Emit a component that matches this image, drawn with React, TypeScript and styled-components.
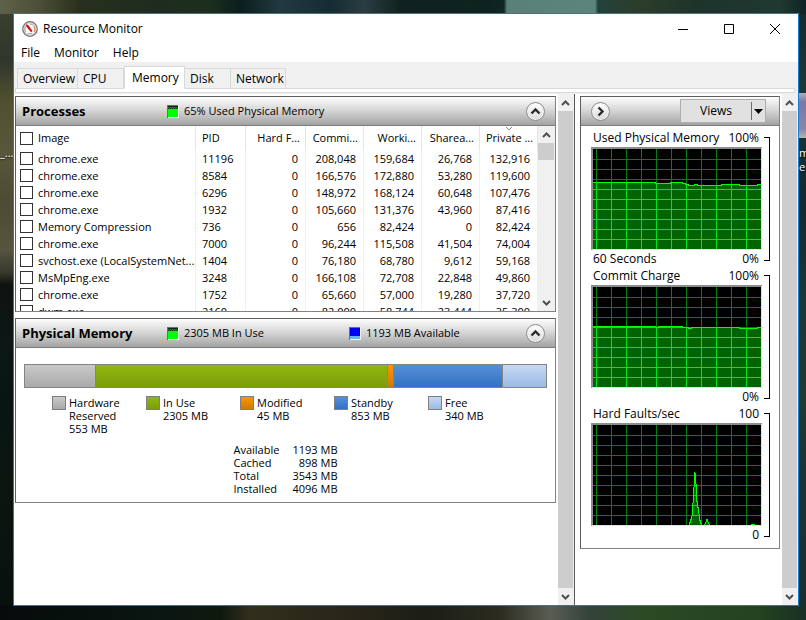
import React from "react";
import styled, { createGlobalStyle } from "styled-components";

const UI_FONT = '"Open Sans", "Noto Sans", sans-serif';

const GlobalStyle = createGlobalStyle`
  *, *::before, *::after { box-sizing: border-box; }
  body {
    margin: 0;
    font-family: ${UI_FONT};
    font-size: 12px;
    color: #000;
  }
  button { font-family: inherit; color: inherit; padding: 0; }
`;

const Desktop = styled.div`
  position: relative;
  display: flex;
  min-height: 100vh;
  padding: 13px 7px 14px 13px;
  overflow: hidden;
  background:
    linear-gradient(90deg, transparent 504px, #588077 507px, #5b857c 595px, transparent 598px) 0 0 / 100% 14px no-repeat,
    linear-gradient(90deg, #5f6249 0, #4c4e35 40px, #28301c 80px, #1e2c20 160px, #1c2f1d 210px, #0b1e1d 240px, #203a40 280px, #152c32 330px, #2b3d43 365px, #10211f 400px, #0e231f 490px, #23413c 600px, #2c3d2a 640px, #1d332b 700px, #1f3a30 780px, #102326 100%) 0 0 / 100% 14px no-repeat,
    linear-gradient(90deg, #060c0b 0, #0a1411 150px, #10180f 220px, #322e1c 250px, #2b2719 330px, #1c1e17 430px, #2c2c1f 500px, #5a5d54 550px, #33423a 590px, #2c4a24 640px, #24421f 760px, #183025 100%) 0 100% / 100% 15px no-repeat,
    linear-gradient(180deg, #3a4333 0, #2f362c 60px, #504f2f 100px, #59573b 150px, #4d4b33 200px, #56543f 250px, #39382c 272px, #0d1311 285px, #0e1716 340px, #081514 400px, #0d1510 480px, #07100e 100%) 0 0 / 14px 100% no-repeat,
    linear-gradient(180deg, #17282a 0, #1c3835 90px, #12292f 200px, #1b3736 300px, #22392f 400px, #1a3234 480px, #1a2f2c 100%);
`;

const DesktopLabel = styled.span<{ $side: "left" | "right"; $top: number }>`
  position: absolute;
  top: ${(p) => p.$top}px;
  ${(p) => (p.$side === "left" ? "left: 0;" : "left: calc(100% - 7px);")}
  color: #fff;
  font-size: 11px;
  line-height: 14px;
  white-space: nowrap;
  text-shadow: 0 1px 2px #000;
`;

const DesktopTile = styled.span`
  position: absolute;
  top: 93px;
  right: 0;
  width: 7px;
  height: 45px;
  background: linear-gradient(#b0aebb, #7b76a4 20%, #8a86a5 80%, #b5b5b0);
`;

const Window = styled.main`
  position: relative;
  flex: 1;
  min-width: 0;
  display: flex;
  flex-direction: column;
  border: 1px solid #1a7cce;
  background: #fff;
`;

const TitleBar = styled.header`
  display: flex;
  align-items: center;
  height: 30px;
  padding-left: 8px;
  gap: 5px;
`;

const Title = styled.h1`
  flex: 1;
  margin: 0;
  font-size: 12px;
  font-weight: 400;
  line-height: 16px;
`;

const CaptionButton = styled.button`
  display: grid;
  place-items: center;
  width: 46px;
  height: 29px;
  border: 0;
  background: none;
`;

const CaptionButtons = styled.div`
  display: flex;
`;

const MenuBar = styled.nav`
  display: flex;
  height: 18px;
  padding-left: 7px;
  gap: 14px;
`;

const MenuItem = styled.button`
  border: 0;
  background: none;
  font-size: 12px;
  line-height: 18px;
  height: 18px;
`;

const TabArea = styled.div`
  height: 32px;
  padding: 4px 3px 1px 1px;
  background: #f0f0f0;
  display: flex;
  flex-direction: column;
`;

const TabList = styled.div`
  display: flex;
  align-items: flex-end;
  height: 23px;
  padding-left: 2px;
  margin-bottom: -1px;
  z-index: 1;
`;

const Tab = styled.button<{ $width: number; $active?: boolean }>`
  width: ${(p) => p.$width}px;
  height: ${(p) => (p.$active ? 23 : 21)}px;
  padding: 0 0 0 ${(p) => (p.$active ? 7 : 5)}px;
  border: 1px solid #d9d9d9;
  border-left-width: ${(p) => (p.$active ? 1 : 0)}px;
  border-bottom-color: ${(p) => (p.$active ? "#fff" : "#d9d9d9")};
  background: ${(p) => (p.$active ? "#fff" : "#f0f0f0")};
  font-size: 12px;
  line-height: 18px;
  text-align: left;
  &:first-child { border-left-width: 1px; }
`;

const TabStrip = styled.div`
  height: 5px;
  border: 1px solid #d9d9d9;
  background: #fff;
`;

const Body = styled.div`
  flex: 1;
  display: flex;
`;

const MainPane = styled.section`
  flex: 1;
  min-width: 0;
  display: flex;
  flex-direction: column;
  gap: 6px;
  padding: 2px 2px 0 1px;
`;

const SidePane = styled.aside`
  width: 208px;
  padding: 2px 2px 0 5px;
  border-left: 1px solid #5a5a5a;
`;

const Panel = styled.section`
  border: 1px solid #828282;
  border-left-color: #5f5f5f;
  border-top-color: #5f5f5f;
  background: #fff;
`;

const PanelHeader = styled.header`
  display: flex;
  align-items: center;
  height: 29px;
  padding: 0 10px 0 6px;
  border-bottom: 1px solid #7d7d7d;
  background: linear-gradient(#fdfdfd, #d8d8d8 45%, #a3a3a3);
`;

const PanelTitle = styled.h2`
  flex: none;
  width: 145px;
  margin: 0;
  font-size: 13px;
  font-weight: 700;
  line-height: 18px;
`;

const Stat = styled.div`
  flex: none;
  display: flex;
  align-items: center;
  gap: 5px;
  width: 182px;
  font-size: 11px;
  line-height: 14px;
  white-space: nowrap;
  &:last-of-type { width: auto; }
`;

const Spacer = styled.span`
  flex: 1;
`;

const RoundButton = styled.button`
  flex: none;
  display: grid;
  place-items: center;
  width: 19px;
  height: 19px;
  border: 1px solid #8e8e8e;
  border-radius: 50%;
  background: linear-gradient(#fff, #d9d9d9);
  box-shadow: inset 0 0 0 1px #f4f4f4;
`;

const ScrollTrack = styled.div<{ $width: number }>`
  flex: none;
  display: flex;
  flex-direction: column;
  width: ${(p) => p.$width}px;
  padding-right: 1px;
  background: #f0f0f0;
`;

const ScrollButton = styled.button`
  display: grid;
  place-items: center;
  height: 17px;
  border: 0;
  background: #f0f0f0;
`;

const ScrollThumb = styled.div<{ $full?: boolean }>`
  ${(p) => (p.$full ? "flex: 1;" : "height: 17px; margin-bottom: auto;")}
  background: #cdcdcd;
`;

const TableArea = styled.div`
  display: flex;
  height: 185px;
`;

const TableClip = styled.div`
  flex: 1;
  min-width: 0;
  overflow: hidden;
`;

const ProcessTable = styled.table`
  width: 100%;
  table-layout: fixed;
  border-collapse: separate;
  border-spacing: 0;
  font-size: 11px;
`;

const Col = styled.col<{ $width?: number }>`
  width: ${(p) => (p.$width ? `${p.$width}px` : "auto")};
`;

const HeadCell = styled.th<{ $right?: boolean }>`
  position: relative;
  height: 24px;
  padding: 0 5px 0 6px;
  border-right: 1px solid #e5e5e5;
  font-weight: 400;
  text-align: ${(p) => (p.$right ? "right" : "left")};
  line-height: 14px;
  white-space: nowrap;
`;

const SortMark = styled.svg`
  position: absolute;
  top: 0;
  left: calc(50% - 4px);
`;

const Cell = styled.td<{ $right?: boolean }>`
  height: 17px;
  padding: 0 7px 0 6px;
  border-right: 1px solid #e9f1fa;
  text-align: ${(p) => (p.$right ? "right" : "left")};
  line-height: 15px;
  white-space: nowrap;
`;

const CheckLabel = styled.label`
  display: flex;
  align-items: center;
  gap: 5px;
  margin-left: -2px;
`;

const CheckBox = styled.input`
  appearance: none;
  flex: none;
  width: 13px;
  height: 13px;
  margin: 0;
  border: 1px solid #333;
  background: #fff;
`;

const MemoryBody = styled.div`
  padding: 16px 8px 7px;
  font-size: 11px;
  line-height: 13px;
`;

const MemoryBar = styled.div`
  display: flex;
  height: 24px;
  border: 1px solid #848484;
`;

const paints: Record<string, string> = {
  hardware: "linear-gradient(#c9c9c9, #a9a9a9)",
  used: "linear-gradient(#90b80e, #7b9d0c)",
  modified: "linear-gradient(#fb9608, #cf7a05)",
  standby: "linear-gradient(#5590d8, #3172c5)",
  free: "linear-gradient(#c6d8f2, #9bbae6)",
};

const Segment = styled.div<{ $kind: string; $mb: number }>`
  flex: ${(p) => p.$mb} 1 0;
  background: ${(p) => paints[p.$kind]};
  & + & { border-left: 1px solid #848484; }
`;

const Legend = styled.ul`
  display: grid;
  grid-template-columns: repeat(5, 94px);
  justify-content: center;
  margin: 8px 0;
  padding: 0 0 0 3px;
  list-style: none;
`;

const LegendItem = styled.li`
  display: flex;
  gap: 3px;
`;

const Swatch = styled.span<{ $kind: string }>`
  flex: none;
  width: 14px;
  height: 14px;
  border: 1px solid #7f7f7f;
  background: ${(p) => paints[p.$kind]};
`;

const LegendText = styled.span`
  white-space: pre-line;
`;

const Totals = styled.table`
  width: 104px;
  margin: 0 auto;
  border-spacing: 0;
  td { padding: 0; text-align: right; white-space: nowrap; }
  th { padding: 0; font-weight: 400; text-align: left; white-space: nowrap; }
`;

const SideHeader = styled(PanelHeader)`
  justify-content: space-between;
  padding: 0 13px 0 10px;
`;

const SplitButton = styled.div`
  display: flex;
  align-items: center;
  width: 86px;
  height: 24px;
  border: 1px solid #adadad;
  background: #e1e1e1;
`;

const ViewsButton = styled.button`
  flex: 1;
  height: 18px;
  border: 0;
  border-right: 1px solid #6e6e6e;
  background: none;
  font-size: 12px;
  line-height: 18px;
`;

const DropButton = styled.button`
  display: grid;
  place-items: center;
  width: 13px;
  height: 18px;
  border: 0;
  background: none;
`;

const Charts = styled.div`
  padding: 3px 9px 5px 10px;
`;

const ChartBlock = styled.figure`
  display: flex;
  gap: 2px;
  margin: 0;
`;

const ChartColumn = styled.div`
  flex: 1;
  min-width: 0;
`;

const ChartLabels = styled.div<{ $height: number }>`
  display: flex;
  justify-content: space-between;
  height: ${(p) => p.$height}px;
  padding: 0 3px 0 2px;
  font-size: 12px;
  line-height: 17px;
  white-space: nowrap;
`;

const ChartFrame = styled.div`
  height: 103px;
  border: solid;
  border-width: 2px 1px 1px 2px;
  border-color: #8c8c8c #e3e3e3 #e3e3e3 #8c8c8c;
  background: #000;
`;

const Bracket = styled.span`
  width: 6px;
  margin: 8px 0 6px;
  border: 1px solid #000;
  border-left: 0;
`;

const Plot = styled.svg`
  display: block;
  width: 100%;
  height: 100px;
`;

type Point = [number, number];

const step = (runs: [number, number][]): Point[] => {
  const pts: Point[] = [];
  runs.forEach(([x, y], i) => {
    const end = i + 1 < runs.length ? runs[i + 1][0] : 168;
    pts.push([x, y], [end, y]);
  });
  return pts;
};

const charts: { title: string; max: string; min: string; caption: string; points: Point[] }[] = [
  {
    title: "Used Physical Memory",
    max: "100%",
    min: "0%",
    caption: "60 Seconds",
    points: step([[0, 33], [62, 34], [77, 33], [89, 34], [92, 35], [95, 36], [101, 35], [104, 36], [128, 35], [146, 36], [164, 35]]),
  },
  {
    title: "Commit Charge",
    max: "100%",
    min: "0%",
    caption: "",
    points: step([[0, 39], [62, 40], [65, 39], [89, 40], [95, 41], [98, 40], [146, 41], [164, 40]]),
  },
  {
    title: "Hard Faults/sec",
    max: "100",
    min: "0",
    caption: "",
    points: [[0, 101], [96, 101], [97, 97], [99, 91], [100, 78], [101, 62], [102, 47], [103, 58], [104, 76], [106, 88], [107, 95], [109, 101], [111, 101], [114, 94], [117, 101], [158, 101], [158, 99], [161, 99], [161, 101], [168, 101]],
  },
];

const columns = [3, 18, 33, 48, 63, 78, 93, 108, 123, 138, 153];
const rows = [10, 20, 30, 40, 50, 60, 70, 80, 90];

const Grid = ({ color }: { color: string }) => (
  <g fill={color}>
    {columns.map((x) => <rect key={`x${x}`} x={x} y={0} width={1} height={100} />)}
    {rows.map((y) => <rect key={`y${y}`} x={0} y={y} width={168} height={1} />)}
  </g>
);

const Chart = ({ id, points }: { id: string; points: Point[] }) => {
  const line = points.map(([x, y]) => `${x},${y + 0.5}`).join(" ");
  const area = `0,102 ${line} 168,102`;
  return (
    <Plot viewBox="0 0 168 100" preserveAspectRatio="none" shapeRendering="crispEdges" aria-hidden="true">
      <Grid color="#008010" />
      <clipPath id={id}>
        <polygon points={area} />
      </clipPath>
      <polygon points={area} fill="#006400" />
      <g clipPath={`url(#${id})`}>
        <Grid color="#00e61e" />
      </g>
      <polyline points={line} fill="none" stroke="#00ff00" strokeWidth={1} />
    </Plot>
  );
};

const Chevron = ({ down }: { down?: boolean }) => (
  <svg width="9" height="8" viewBox="0 0 9 8" aria-hidden="true">
    <path d={down ? "M1 2l3.5 3.5L8 2" : "M1 6l3.5-3.5L8 6"} fill="none" stroke="#505050" strokeWidth="2" />
  </svg>
);

const Scrollbar = ({ width, full }: { width: number; full?: boolean }) => (
  <ScrollTrack $width={width}>
    <ScrollButton aria-label="Scroll up"><Chevron /></ScrollButton>
    <ScrollThumb $full={full} />
    <ScrollButton aria-label="Scroll down"><Chevron down /></ScrollButton>
  </ScrollTrack>
);

const Meter = ({ blue }: { blue?: boolean }) => {
  const split = blue ? 8 : 3;
  const dots: Point[] = [];
  for (let y = 2; y < split; y += 2) for (let x = 2; x < 11; x += 2) dots.push([x, y]);
  return (
    <svg width="12" height="13" viewBox="0 0 12 13" shapeRendering="crispEdges" aria-hidden="true">
      <path d="M0 0h12v13H0z" fill="#f4f4f4" />
      <path d="M0 0h11v1H1v12H0z" fill="#6d6d6d" />
      <path d="M1 1h10v11H1z" fill={blue ? "#66b2ff" : "#00ff00"} />
      <path d={`M1 1h10v${split}H1z`} fill={blue ? "#0000f0" : "#00a000"} />
      {blue
        ? dots.map(([x, y]) => <rect key={`${x}-${y}`} x={x} y={y} width="1" height="1" fill="#000070" />)
        : <path d="M1 1h10v1H1zM2 2h1v1h-1zM4 2h1v1h-1zM6 2h1v1h-1zM8 2h1v1h-1zM10 2h1v1h-1zM1 3h1v1h-1zM3 3h1v1h-1zM5 3h1v1h-1zM7 3h1v1h-1zM9 3h1v1h-1z" fill="#003000" />}
    </svg>
  );
};

const AppIcon = () => (
  <svg width="16" height="16" viewBox="0 0 16 16" aria-hidden="true">
    <circle cx="8" cy="8" r="7.2" fill="#fafafa" stroke="#7b7b78" strokeWidth="1.5" />
    <circle cx="8" cy="8" r="5.9" fill="none" stroke="#d8d8d5" strokeWidth="1" />
    <path d="M3.6 10.8A5 5 0 0 1 5 4M8 3.2a5 5 0 0 1 3 1" fill="none" stroke="#9a9a98" />
    <path d="M11.6 4.8a5 5 0 0 1 .4 6" fill="none" stroke="#e08a50" strokeWidth="1.3" />
    <path d="M4 3.2l2.2.8 4.3 6-1.5 1.2-4.5-5.4z" fill="#cc1414" />
    <path d="M5.5 12.5h5" stroke="#b0b0ae" />
  </svg>
);

const RoundChevron = ({ right }: { right?: boolean }) => (
  <svg width="11" height="11" viewBox="0 0 11 11" aria-hidden="true">
    <path d={right ? "M3.5 1.5l4 4-4 4" : "M1.5 7.5l4-4 4 4"} fill="none" stroke="#2b2b2b" strokeWidth="2.4" />
  </svg>
);

const tabs: [string, number][] = [["Overview", 61], ["CPU", 46], ["Memory", 61], ["Disk", 46], ["Network", 55]];

const headings = ["Hard F...", "Commi...", "Worki...", "Sharea...", "Private ..."];

const processes = [
  ["chrome.exe", "11196", "0", "208,048", "159,684", "26,768", "132,916"],
  ["chrome.exe", "8584", "0", "166,576", "172,880", "53,280", "119,600"],
  ["chrome.exe", "6296", "0", "148,972", "168,124", "60,648", "107,476"],
  ["chrome.exe", "1932", "0", "105,660", "131,376", "43,960", "87,416"],
  ["Memory Compression", "736", "0", "656", "82,424", "0", "82,424"],
  ["chrome.exe", "7000", "0", "96,244", "115,508", "41,504", "74,004"],
  ["svchost.exe (LocalSystemNet...", "1404", "0", "76,180", "68,780", "9,612", "59,168"],
  ["MsMpEng.exe", "3248", "0", "166,108", "72,708", "22,848", "49,860"],
  ["chrome.exe", "1752", "0", "65,660", "57,000", "19,280", "37,720"],
  ["dwm.exe", "2160", "0", "82,000", "58,744", "23,444", "35,300"],
];

const memory: { kind: string; label: string; mb: number }[] = [
  { kind: "hardware", label: "Hardware\nReserved", mb: 553 },
  { kind: "used", label: "In Use", mb: 2305 },
  { kind: "modified", label: "Modified", mb: 45 },
  { kind: "standby", label: "Standby", mb: 853 },
  { kind: "free", label: "Free", mb: 340 },
];

const totals = [["Available", "1193 MB"], ["Cached", "898 MB"], ["Total", "3543 MB"], ["Installed", "4096 MB"]];

const Processes = () => (
  <Panel>
    <PanelHeader>
      <PanelTitle>Processes</PanelTitle>
      <Stat><Meter />65% Used Physical Memory</Stat>
      <Spacer />
      <RoundButton aria-label="Collapse processes"><RoundChevron /></RoundButton>
    </PanelHeader>
    <TableArea>
      <TableClip>
        <ProcessTable>
          <colgroup>
            <Col />
            <Col $width={50} />
            <Col $width={60} />
            <Col $width={58} />
            <Col $width={58} />
            <Col $width={58} />
            <Col $width={58} />
          </colgroup>
          <thead>
            <tr>
              <HeadCell><CheckLabel><CheckBox type="checkbox" />Image</CheckLabel></HeadCell>
              <HeadCell>PID</HeadCell>
              {headings.map((h, i) => (
                <HeadCell key={h} $right>
                  {h}
                  {i === headings.length - 1 && (
                    <SortMark width="8" height="5" viewBox="0 0 8 5" aria-hidden="true">
                      <path d="M1 1l3 3 3-3" fill="none" stroke="#8a8a8a" />
                    </SortMark>
                  )}
                </HeadCell>
              ))}
            </tr>
          </thead>
          <tbody>
            {processes.map(([name, pid, ...numbers]) => (
              <tr key={pid}>
                <Cell><CheckLabel><CheckBox type="checkbox" />{name}</CheckLabel></Cell>
                <Cell>{pid}</Cell>
                {numbers.map((n, i) => <Cell key={i} $right>{n}</Cell>)}
              </tr>
            ))}
          </tbody>
        </ProcessTable>
      </TableClip>
      <Scrollbar width={17} />
    </TableArea>
  </Panel>
);

const PhysicalMemory = () => (
  <Panel>
    <PanelHeader>
      <PanelTitle>Physical Memory</PanelTitle>
      <Stat><Meter />2305 MB In Use</Stat>
      <Stat><Meter blue />1193 MB Available</Stat>
      <Spacer />
      <RoundButton aria-label="Collapse physical memory"><RoundChevron /></RoundButton>
    </PanelHeader>
    <MemoryBody>
      <MemoryBar>
        {memory.map((m) => <Segment key={m.kind} $kind={m.kind} $mb={m.mb} />)}
      </MemoryBar>
      <Legend>
        {memory.map((m) => (
          <LegendItem key={m.kind}>
            <Swatch $kind={m.kind} />
            <LegendText>{`${m.label}\n${m.mb} MB`}</LegendText>
          </LegendItem>
        ))}
      </Legend>
      <Totals>
        <tbody>
          {totals.map(([label, value]) => (
            <tr key={label}><th scope="row">{label}</th><td>{value}</td></tr>
          ))}
        </tbody>
      </Totals>
    </MemoryBody>
  </Panel>
);

export default function App() {
  return (
    <Desktop>
      <GlobalStyle />
      <DesktopLabel $side="left" $top={146}>_...</DesktopLabel>
      <DesktopTile />
      <DesktopLabel $side="right" $top={146}>m</DesktopLabel>
      <DesktopLabel $side="right" $top={160}>er</DesktopLabel>
      <Window>
        <TitleBar>
          <AppIcon />
          <Title>Resource Monitor</Title>
          <CaptionButtons>
            <CaptionButton aria-label="Minimize">
              <svg width="10" height="10" shapeRendering="crispEdges"><path d="M0 5h10v1H0z" /></svg>
            </CaptionButton>
            <CaptionButton aria-label="Maximize">
              <svg width="10" height="10"><path d="M.5.5h9v9h-9z" fill="none" stroke="#000" /></svg>
            </CaptionButton>
            <CaptionButton aria-label="Close">
              <svg width="10" height="10"><path d="M0 0l10 10M10 0L0 10" fill="none" stroke="#000" /></svg>
            </CaptionButton>
          </CaptionButtons>
        </TitleBar>
        <MenuBar>
          <MenuItem>File</MenuItem>
          <MenuItem>Monitor</MenuItem>
          <MenuItem>Help</MenuItem>
        </MenuBar>
        <TabArea>
          <TabList role="tablist">
            {tabs.map(([name, width]) => (
              <Tab key={name} role="tab" aria-selected={name === "Memory"} $width={width} $active={name === "Memory"}>
                {name}
              </Tab>
            ))}
          </TabList>
          <TabStrip />
        </TabArea>
        <Body>
          <MainPane>
            <Processes />
            <PhysicalMemory />
          </MainPane>
          <Scrollbar width={16} full />
          <SidePane>
            <Panel>
              <SideHeader>
                <RoundButton aria-label="Hide graphs"><RoundChevron right /></RoundButton>
                <SplitButton>
                  <ViewsButton>Views</ViewsButton>
                  <DropButton aria-label="Choose view">
                    <svg width="9" height="5" aria-hidden="true"><path d="M0 0h9L4.500 5z" /></svg>
                  </DropButton>
                </SplitButton>
              </SideHeader>
              <Charts>
                {charts.map((c, i) => (
                  <ChartBlock key={c.title}>
                    <ChartColumn>
                      <ChartLabels $height={18}><span>{c.title}</span><span>{c.max}</span></ChartLabels>
                      <ChartFrame><Chart id={`area-${i}`} points={c.points} /></ChartFrame>
                      <ChartLabels $height={17}><span>{c.caption}</span><span>{c.min}</span></ChartLabels>
                    </ChartColumn>
                    <Bracket />
                  </ChartBlock>
                ))}
              </Charts>
            </Panel>
          </SidePane>
          <Scrollbar width={16} full />
        </Body>
      </Window>
    </Desktop>
  );
}
